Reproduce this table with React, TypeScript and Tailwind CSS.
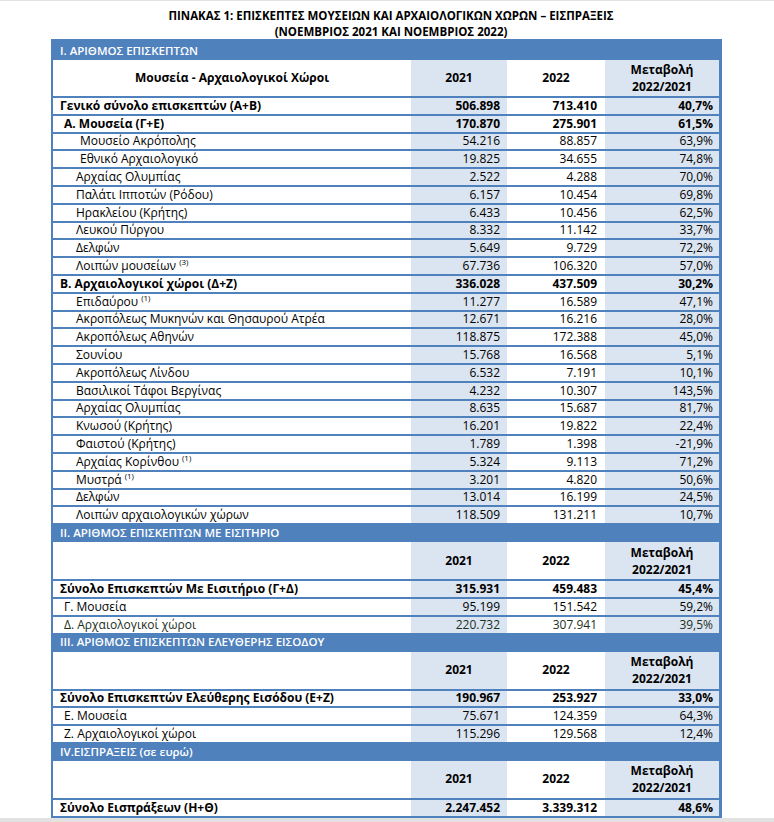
import React from "react";

type Row = {
  label: string;
  sup?: string;
  a: string;
  b: string;
  c: string;
  bold?: boolean;
  indent?: number;
  tone?: string;
};

const BLUE = "bg-[#4f81bd]";

const section1: Row[] = [
  { label: "Γενικό σύνολο επισκεπτών (Α+Β)", a: "506.898", b: "713.410", c: "40,7%", bold: true, indent: 0 },
  { label: "Α. Μουσεία (Γ+Ε)", a: "170.870", b: "275.901", c: "61,5%", bold: true, indent: 4 },
  { label: "Μουσείο Ακρόπολης", a: "54.216", b: "88.857", c: "63,9%", indent: 20 },
  { label: "Εθνικό Αρχαιολογικό", a: "19.825", b: "34.655", c: "74,8%", indent: 20 },
  { label: "Αρχαίας Ολυμπίας", a: "2.522", b: "4.288", c: "70,0%", indent: 16 },
  { label: "Παλάτι Ιπποτών (Ρόδου)", a: "6.157", b: "10.454", c: "69,8%", indent: 16 },
  { label: "Ηρακλείου (Κρήτης)", a: "6.433", b: "10.456", c: "62,5%", indent: 16 },
  { label: "Λευκού Πύργου", a: "8.332", b: "11.142", c: "33,7%", indent: 16 },
  { label: "Δελφών", a: "5.649", b: "9.729", c: "72,2%", indent: 16 },
  { label: "Λοιπών μουσείων", sup: "(3)", a: "67.736", b: "106.320", c: "57,0%", indent: 16 },
  { label: "Β. Αρχαιολογικοί χώροι (Δ+Ζ)", a: "336.028", b: "437.509", c: "30,2%", bold: true, indent: 0 },
  { label: "Επιδαύρου", sup: "(1)", a: "11.277", b: "16.589", c: "47,1%", indent: 16 },
  { label: "Ακροπόλεως Μυκηνών και Θησαυρού Ατρέα", a: "12.671", b: "16.216", c: "28,0%", indent: 16 },
  { label: "Ακροπόλεως Αθηνών", a: "118.875", b: "172.388", c: "45,0%", indent: 16 },
  { label: "Σουνίου", a: "15.768", b: "16.568", c: "5,1%", indent: 16 },
  { label: "Ακροπόλεως Λίνδου", a: "6.532", b: "7.191", c: "10,1%", indent: 16 },
  { label: "Βασιλικοί Τάφοι Βεργίνας", a: "4.232", b: "10.307", c: "143,5%", indent: 16 },
  { label: "Αρχαίας Ολυμπίας", a: "8.635", b: "15.687", c: "81,7%", indent: 16 },
  { label: "Κνωσού (Κρήτης)", a: "16.201", b: "19.822", c: "22,4%", indent: 16 },
  { label: "Φαιστού (Κρήτης)", a: "1.789", b: "1.398", c: "-21,9%", indent: 16 },
  { label: "Αρχαίας Κορίνθου", sup: "(1)", a: "5.324", b: "9.113", c: "71,2%", indent: 16 },
  { label: "Μυστρά", sup: "(1)", a: "3.201", b: "4.820", c: "50,6%", indent: 16 },
  { label: "Δελφών", a: "13.014", b: "16.199", c: "24,5%", indent: 16 },
  { label: "Λοιπών αρχαιολογικών χώρων", a: "118.509", b: "131.211", c: "10,7%", indent: 16 },
];

const section2: Row[] = [
  { label: "Σύνολο Επισκεπτών Με Εισιτήριο (Γ+Δ)", a: "315.931", b: "459.483", c: "45,4%", bold: true, indent: 0 },
  { label: "Γ. Μουσεία", a: "95.199", b: "151.542", c: "59,2%", indent: 4 },
  { label: "Δ. Αρχαιολογικοί χώροι", a: "220.732", b: "307.941", c: "39,5%", indent: 4, tone: "text-[#1c301c]" },
];

const section3: Row[] = [
  { label: "Σύνολο Επισκεπτών Ελεύθερης Εισόδου (Ε+Ζ)", a: "190.967", b: "253.927", c: "33,0%", bold: true, indent: 0 },
  { label: "Ε. Μουσεία", a: "75.671", b: "124.359", c: "64,3%", indent: 4 },
  { label: "Ζ. Αρχαιολογικοί χώροι", a: "115.296", b: "129.568", c: "12,4%", indent: 4 },
];

const section4: Row[] = [
  { label: "Σύνολο Εισπράξεων (Η+Θ)", a: "2.247.452", b: "3.339.312", c: "48,6%", bold: true, indent: 0 },
];

const GRID = "grid grid-cols-[358px_96px_98px_114px]";

function SectionHeader({ title }: { title: string }) {
  return (
    <div className={`${BLUE} h-[19px] flex items-center pl-[7px] text-white text-[11.5px] font-semibold leading-none`}>
      {title}
    </div>
  );
}

function ColumnHeader({ first, h }: { first?: string; h: string }) {
  return (
    <div className={`${GRID} ${h} font-bold text-[12px] text-black`}>
      <div className="bg-white flex items-center justify-center">{first}</div>
      <div className="bg-[#dbe5f1] flex items-center justify-center">2021</div>
      <div className="bg-white flex items-center justify-center">2022</div>
      <div className="bg-[#dbe5f1] flex flex-col items-center justify-center leading-[17px]">
        <span>Μεταβολή</span>
        <span>2022/2021</span>
      </div>
    </div>
  );
}

function DataRow({ r }: { r: Row }) {
  const weight = r.bold ? "font-bold" : "font-normal";
  const tone = r.tone ?? "text-black";
  return (
    <div className={`${GRID} h-[17.8px] border-t-2 border-[#4f81bd] text-[12px] leading-none ${weight} ${tone}`}>
      <div className="bg-white flex items-center whitespace-nowrap" style={{ paddingLeft: 7 + (r.indent ?? 0) }}>
        <span>{r.label}</span>
        {r.sup && <span className="text-[8px] relative -top-[4px] ml-[3px]">{r.sup}</span>}
      </div>
      <div className="bg-[#dbe5f1] flex items-center justify-end pr-[7px]">{r.a}</div>
      <div className="bg-white flex items-center justify-end pr-[8px]">{r.b}</div>
      <div className="bg-[#dbe5f1] flex items-center justify-end pr-[6px]">{r.c}</div>
    </div>
  );
}

export default function App() {
  return (
    <div className="w-[774px] h-[822px] bg-white flex flex-col overflow-hidden font-['Open_Sans','Noto_Sans',sans-serif] text-black">
      <div className="h-px bg-[#e2e2e2]" />
      <div className="pt-[7px] h-[38px] flex flex-col items-center font-bold text-[11.5px] pl-[8px]">
        <div className="leading-[16px]">ΠΙΝΑΚΑΣ 1: ΕΠΙΣΚΕΠΤΕΣ ΜΟΥΣΕΙΩΝ ΚΑΙ ΑΡΧΑΙΟΛΟΓΙΚΩΝ ΧΩΡΩΝ – ΕΙΣΠΡΑΞΕΙΣ</div>
        <div className="leading-[15px]">(ΝΟΕΜΒΡΙΟΣ 2021 ΚΑΙ ΝΟΕΜΒΡΙΟΣ 2022)</div>
      </div>
      <div className="ml-[51px] w-[671px] border-l-2 border-r-[3px] border-t-2 border-b-2 border-[#4f81bd]">
        <SectionHeader title="I. ΑΡΙΘΜΟΣ ΕΠΙΣΚΕΠΤΩΝ" />
        <ColumnHeader first="Μουσεία - Αρχαιολογικοί Χώροι" h="h-[36px]" />
        {section1.map((r, i) => (
          <DataRow key={"a" + i} r={r} />
        ))}
        <SectionHeader title="II. ΑΡΙΘΜΟΣ ΕΠΙΣΚΕΠΤΩΝ ΜΕ ΕΙΣΙΤΗΡΙΟ" />
        <ColumnHeader h="h-[37px]" />
        {section2.map((r, i) => (
          <DataRow key={"b" + i} r={r} />
        ))}
        <SectionHeader title="III. ΑΡΙΘΜΟΣ ΕΠΙΣΚΕΠΤΩΝ ΕΛΕΥΘΕΡΗΣ ΕΙΣΟΔΟΥ" />
        <ColumnHeader h="h-[37px]" />
        {section3.map((r, i) => (
          <DataRow key={"c" + i} r={r} />
        ))}
        <SectionHeader title="IV.ΕΙΣΠΡΑΞΕΙΣ (σε ευρώ)" />
        <ColumnHeader h="h-[37px]" />
        {section4.map((r, i) => (
          <DataRow key={"d" + i} r={r} />
        ))}
      </div>
      <div className="flex-1 bg-[#e2e2e2]" />
    </div>
  );
}
